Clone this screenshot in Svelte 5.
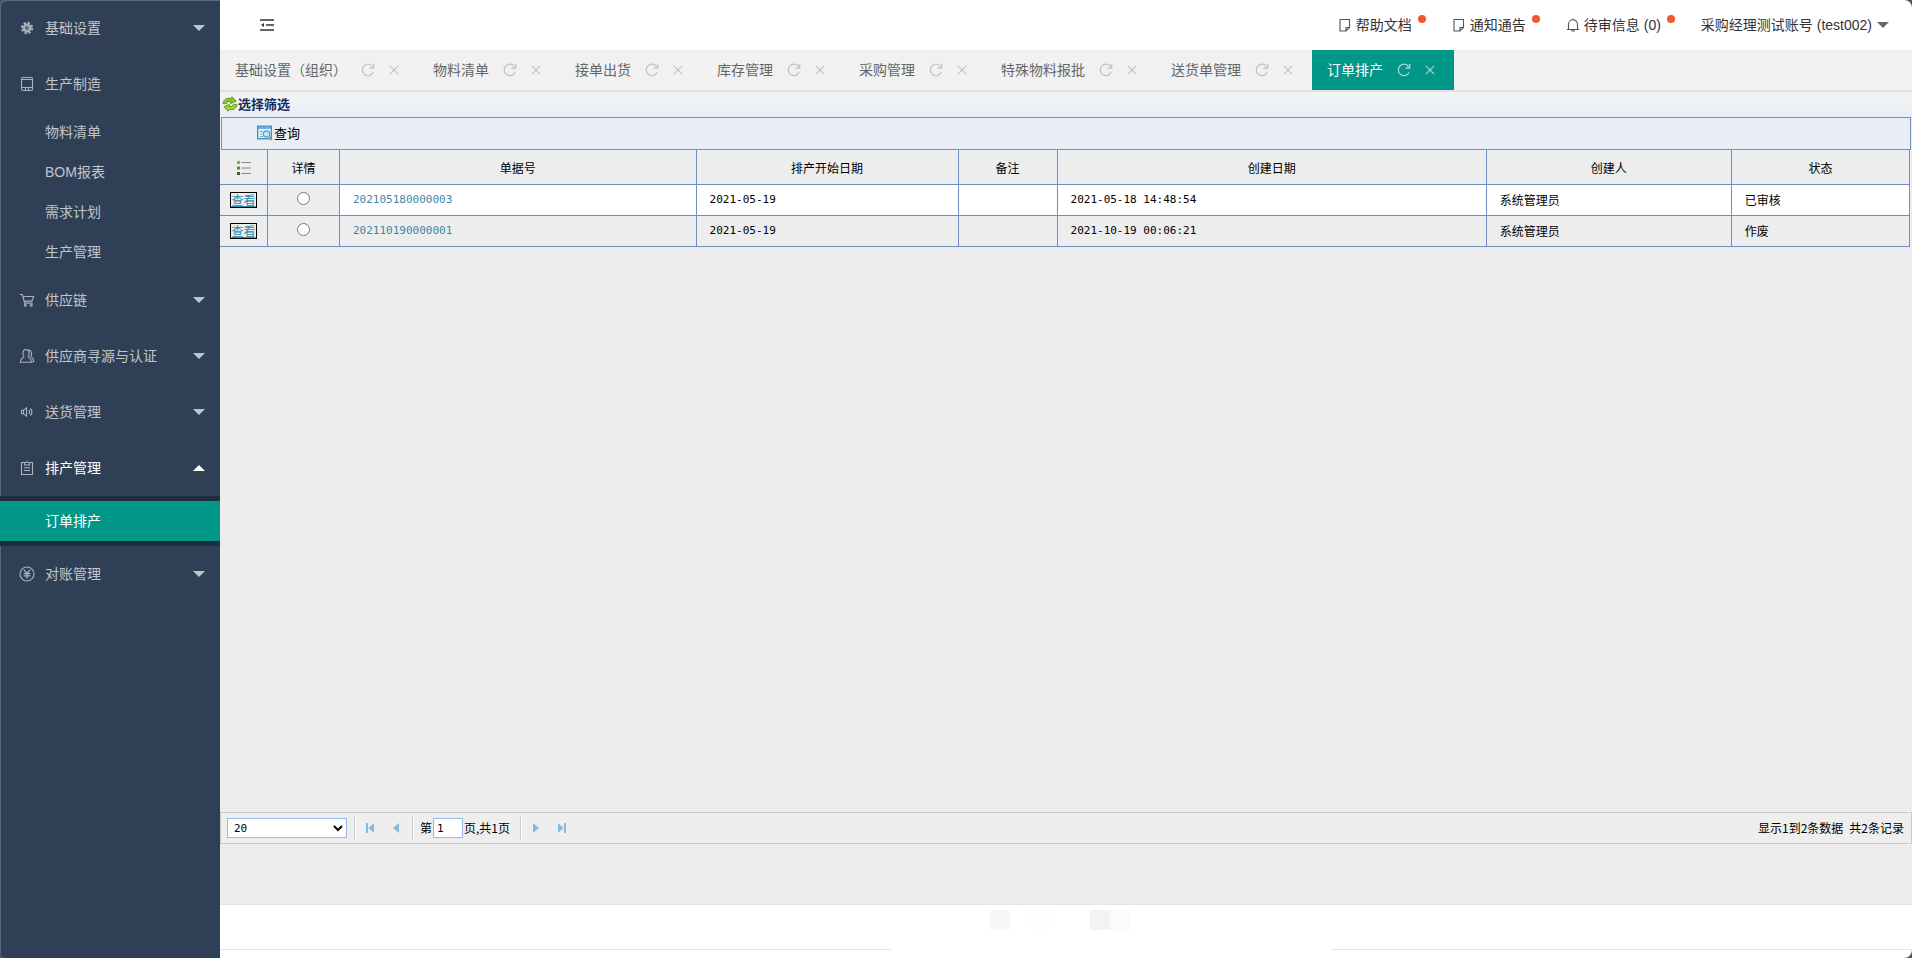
<script>
  const groups = [
    { label: '基础设置', icon: 'gear', arrow: 'down' },
    { label: '生产制造', icon: 'tablet', children: ['物料清单', 'BOM报表', '需求计划', '生产管理'] },
    { label: '供应链', icon: 'cart', arrow: 'down' },
    { label: '供应商寻源与认证', icon: 'users', arrow: 'down' },
    { label: '送货管理', icon: 'speaker', arrow: 'down' },
    { label: '排产管理', icon: 'clipboard', arrow: 'up', open: true, children: ['订单排产'] },
    { label: '对账管理', icon: 'yen', arrow: 'down' }
  ];
  const tabs = ['基础设置（组织）', '物料清单', '接单出货', '库存管理', '采购管理', '特殊物料报批', '送货单管理', '订单排产'];
  const notices = [
    { label: '帮助文档', icon: 'note' },
    { label: '通知通告', icon: 'note' },
    { label: '待审信息 (0)', icon: 'bell' }
  ];
  const rows = [
    { no: '202105180000003', start: '2021-05-19', created: '2021-05-18 14:48:54', by: '系统管理员', state: '已审核' },
    { no: '202110190000001', start: '2021-05-19', created: '2021-10-19 00:06:21', by: '系统管理员', state: '作废' }
  ];
  const tiles = ['a', '', 'c', '', '', 'b', 'd', ''];
  let active = $state('订单排产');
  let picked = $state('');
</script>

{#snippet icon(name)}
  <svg class="icon" viewBox="0 0 16 16" width="16" height="16" fill="none" stroke="currentColor" stroke-width="1.1" aria-hidden="true">
    {#if name === 'gear'}
      <circle cx="8" cy="8" r="3.1" stroke-width="2.6" />
      <circle cx="8" cy="8" r="5" stroke-width="2.4" stroke-dasharray="2.2 1.727" />
      <circle cx="8" cy="8" r="0.8" fill="currentColor" stroke="none" />
    {:else if name === 'tablet'}
      <rect x="2.5" y="1.5" width="11" height="13" rx="1.5" />
      <path d="M2.5 3.500h11M2.5 11.5h11M6.5 11.5v3M9.5 11.5v3" />
    {:else if name === 'cart'}
      <path d="M1 2.500h2.300l2.400 8.600h8M4.200 4.500h10.300l-1.600 4.600H5.400" />
      <circle cx="6.3" cy="13.2" r="1" />
      <circle cx="12.3" cy="13.2" r="1" />
    {:else if name === 'users'}
      <path d="M5 8.400C3.400 7.200 3.300 1.500 7 1.500s3.600 5.700 2 6.900c.2 1.600 3.600 1.300 3.600 5.900H1.200c0-4.600 3.600-4.300 3.800-5.900zM9.600 2.100c3.300-.4 3.600 4.600 2.200 6 .2 1.100 2.800 1.600 2.900 5.200l-1.500.9" />
    {:else if name === 'speaker'}
      <path d="M2.500 6.300h2l3-2.500v8.400l-3-2.500h-2zM4.500 6.300v3.400M9.800 6c1 1.100 1 2.900 0 4M11.400 4.500c2 1.900 2 5.100 0 7" />
    {:else if name === 'clipboard'}
      <path d="M5 2.500H2.500v12h11v-12H11" />
      <path d="M5.500 5V2.500h1.400a1.200 1.200 0 0 1 2.200 0h1.400V5zM5 7.800h6M5 10.500h6" />
    {:else if name === 'yen'}
      <circle cx="8" cy="8" r="7" />
      <path d="M5 3.800l3 3.600 3-3.600M8 7.400v5M4.700 7.600h6.600M4.700 9.900h6.600" stroke-width="1.3" />
    {:else if name === 'note'}
      <path d="M3 2.500h9.500v8l-3.500 3.500H3zM12.500 10.500H9v3.500" />
    {:else if name === 'bell'}
      <path d="M1.800 12.500h12.400M3.500 12.500V7.300a4.500 4.500 0 0 1 9 0v5.200M8 2.800V1.500M6.500 12.500c0 2.400 3 2.400 3 0" />
    {/if}
  </svg>
{/snippet}

<div class="shell">
  <nav class="side" aria-label="主菜单">
    {#each groups as g}
      <button type="button" class="group" class:open={g.open}>
        {@render icon(g.icon)}
        <span>{g.label}</span>
        {#if g.arrow}<i class="caret {g.arrow}"></i>{/if}
      </button>
      {#if g.children}
        <div class="subs" class:dark={g.open}>
          {#each g.children as c}
            <a href="#top" class="sub" class:current={g.open}>{c}</a>
          {/each}
        </div>
      {/if}
    {/each}
  </nav>

  <main class="main">
    <header class="top">
      <button type="button" class="fold" aria-label="收起菜单">
        <svg viewBox="0 0 14 12" width="14" height="12" stroke="#333" stroke-width="1.4" fill="none" aria-hidden="true">
          <path d="M0 1h14M6 6h8M0 11h14" />
          <path d="M4 4v4L1 6z" fill="#333" stroke="none" />
        </svg>
      </button>
      <div class="notices">
        {#each notices as n}
          <a href="#top" class="notice">{@render icon(n.icon)}<span>{n.label}</span><i class="dot"></i></a>
        {/each}
        <button type="button" class="user">采购经理测试账号 (test002)<i class="caret down"></i></button>
      </div>
    </header>

    <div class="tabs">
      {#each tabs as t}
        <div class="tab" class:active={t === active}>
          <button type="button" class="name" onclick={() => (active = t)}>{t}</button>
          <button type="button" class="reload" aria-label="刷新">
            <svg viewBox="0 0 14 14" width="14" height="14" fill="none" stroke="currentColor" stroke-width="1.3" aria-hidden="true">
              <path d="M12.200 9.300A5.700 5.700 0 1 1 11.600 3.500M12.700 1v4H8.700" />
            </svg>
          </button>
          <button type="button" class="close" aria-label="关闭">
            <svg viewBox="0 0 10 10" width="10" height="10" fill="none" stroke="currentColor" stroke-width="1.2" aria-hidden="true">
              <path d="M.8.8l8.400 8.400M9.200.8L.8 9.200" />
            </svg>
          </button>
        </div>
      {/each}
    </div>

    <section class="content">
      <h1 class="title">
        <svg viewBox="0 0 16 16" width="16" height="16" aria-hidden="true">
          <path d="M1 7.500C1.500 3.500 5 1.500 9 2.500L10 .8l4.200 4.400L8.500 7.600l.3-2C6.500 5 5 5.800 4.500 7.800z" fill="#8fc31f" stroke="#4d8a10" stroke-width=".8" />
          <path d="M15 8.500c-.5 4-4 6-8 5L6 15.200 1.800 10.800l5.700-2.400-.3 2c2.300.6 3.800-.2 4.300-2.200z" fill="#a5d22d" stroke="#4d8a10" stroke-width=".8" />
        </svg>选择筛选
      </h1>
      <div class="filter">
        <button type="button" class="query">
          <svg viewBox="0 0 16 16" width="16" height="16" fill="none" aria-hidden="true">
            <rect x=".7" y="1.200" width="13.600" height="12.600" fill="#e4f3fb" stroke="#2f86b8" stroke-width="1.200" />
            <path d="M1 3h13" stroke="#5fb0dc" stroke-width="1.800" />
            <path d="M3 6.500h3M3 9h2M3 11.500h3" stroke="#7aa7c0" />
            <circle cx="9.500" cy="9" r="3.200" fill="#c4e7f7" stroke="#4a9cc9" stroke-width="1.200" />
            <path d="M12.300 11.900l2.700 3" stroke="#c08a48" stroke-width="2" />
          </svg>查询
        </button>
      </div>

      <table class="grid">
        <colgroup>
          <col class="c1" /><col class="c2" /><col class="c3" /><col class="c4" /><col class="c5" /><col class="c6" /><col class="c7" /><col class="c8" />
        </colgroup>
        <thead>
          <tr>
            <th aria-label="操作">
              <svg viewBox="0 0 14 14" width="14" height="14" aria-hidden="true">
                <path d="M4.500 1.500H14M4.500 7H14M4.500 12.500H14" stroke="#888" />
                <path d="M0 0h3v3H0z" fill="#8aa872" />
                <path d="M0 5.500h3v3H0z" fill="#5f8a3c" />
                <path d="M0 11h3v3H0z" fill="#3f6a1e" />
              </svg>
            </th>
            <th>详情</th><th>单据号</th><th>排产开始日期</th><th>备注</th><th>创建日期</th><th>创建人</th><th>状态</th>
          </tr>
        </thead>
        <tbody>
          {#each rows as r}
            <tr>
              <td class="mid"><a href="#top" class="view">查看</a></td>
              <td class="mid"><input type="radio" name="row" value={r.no} bind:group={picked} aria-label={r.no} /></td>
              <td class="num"><a href="#top">{r.no}</a></td>
              <td class="num">{r.start}</td>
              <td></td>
              <td class="num">{r.created}</td>
              <td>{r.by}</td>
              <td>{r.state}</td>
            </tr>
          {/each}
        </tbody>
      </table>

      <div class="space"></div>

      <div class="pager">
        <select class="size" aria-label="每页条数"><option>20</option><option>50</option></select>
        <i class="sep"></i>
        <button type="button" class="go" aria-label="首页"><svg viewBox="0 0 10 12" width="10" height="12" aria-hidden="true"><path d="M1 1h2v10H1zM9 1v10L3.500 6z" /></svg></button>
        <button type="button" class="go" aria-label="上一页"><svg viewBox="0 0 10 12" width="10" height="12" aria-hidden="true"><path d="M8 1v10L2 6z" /></svg></button>
        <i class="sep"></i>
        <label class="page">第<input type="text" value="1" />页,共1页</label>
        <i class="sep"></i>
        <button type="button" class="go" aria-label="下一页"><svg viewBox="0 0 10 12" width="10" height="12" aria-hidden="true"><path d="M2 1v10l6-5z" /></svg></button>
        <button type="button" class="go" aria-label="末页"><svg viewBox="0 0 10 12" width="10" height="12" aria-hidden="true"><path d="M1 1v10l5.500-5zM7 1h2v10H7z" /></svg></button>
        <div class="total"><span>显示1到2条数据</span><span>共2条记录</span></div>
      </div>
      <div class="rest"></div>
    </section>

    <footer class="foot">
      <div class="tiles">
        {#each tiles as t}<i class="tile {t}"></i>{/each}
      </div>
      <div class="rules"><i class="left"></i><i class="hole"></i><i class="right"></i></div>
    </footer>
  </main>
</div>

<style>
  :global(body) {
    background: #4a5768;
  }
  .shell {
    display: flex;
    min-height: 100vh;
    font: 14px/20px "Liberation Sans", "Noto Sans CJK SC", sans-serif;
    color: #333;
  }
  .shell :is(button, input, select) {
    font: inherit;
    color: inherit;
  }
  .shell button {
    padding: 0;
    border: 0;
    background: none;
    cursor: pointer;
  }
  a {
    color: inherit;
    text-decoration: none;
  }
  svg {
    display: block;
    flex: none;
  }
  .caret {
    border: 6px solid transparent;
    border-bottom-width: 0;
    border-top-color: currentColor;
  }
  .caret.up {
    border-bottom-width: 6px;
    border-top-width: 0;
    border-top-color: transparent;
    border-bottom-color: currentColor;
  }

  .side {
    box-sizing: border-box;
    flex: 0 0 220px;
    background: #2f4056;
    box-shadow: inset 1px 1px 0 #5b6878;
    border-radius: 6px 0 0 6px;
    color: #c1c6cd;
  }
  .side .group {
    display: flex;
    align-items: center;
    box-sizing: border-box;
    width: 100%;
    height: 56px;
    padding: 0 15px 0 19px;
    gap: 10px;
    text-align: left;
  }
  .group .icon {
    color: #a9b1bb;
  }
  .group .caret {
    margin-left: auto;
  }
  .side .group.open {
    color: #fff;
  }
  .subs.dark {
    padding: 5px 0;
    background: #1f2e3d;
  }
  .sub {
    display: block;
    padding-left: 45px;
    line-height: 40px;
  }
  .sub.current {
    background: #009688;
    color: #fff;
  }

  .main {
    display: flex;
    flex: 1;
    flex-direction: column;
    min-width: 0;
    overflow: hidden;
    border-radius: 0 8px 8px 0;
    background: #fff;
  }
  .top {
    display: flex;
    align-items: center;
    justify-content: space-between;
    height: 50px;
    padding: 0 23px 0 40px;
  }
  .notices {
    display: flex;
    align-items: center;
    gap: 25px;
  }
  .notice {
    display: flex;
    align-items: center;
    gap: 3px;
  }
  .notice .icon {
    color: #555;
  }
  .dot {
    align-self: flex-start;
    width: 8px;
    height: 8px;
    margin-left: 3px;
    border-radius: 50%;
    background: #f0592b;
  }
  .user {
    display: flex;
    align-items: center;
    gap: 5px;
  }
  .shell .user {
    padding-left: 1px;
  }
  .user .caret {
    color: #666;
  }

  .tabs {
    display: flex;
    height: 40px;
    background: #f1f1f1;
    border-bottom: 2px solid #e2e2e2;
    color: #666;
  }
  .tab {
    display: flex;
    align-items: center;
    padding: 0 19px 0 15px;
  }
  .tab .reload,
  .tab .close {
    margin-left: 14px;
    color: #c4c4c4;
  }
  .tab.active {
    background: #009688;
    color: #fff;
  }
  .tab.active .reload,
  .tab.active .close {
    color: #a6dad5;
  }

  .content {
    display: flex;
    flex: 1;
    flex-direction: column;
    background: #ededed;
    font: 12px/16px "Noto Sans CJK SC", sans-serif;
    color: #000;
  }
  .title {
    display: flex;
    align-items: center;
    box-sizing: border-box;
    height: 25px;
    margin: 0;
    padding: 0 0 2px 2px;
    background: linear-gradient(#f3f3f3, #e9eef6);
    font-size: 13px;
    color: #15295c;
  }
  .filter {
    display: flex;
    box-sizing: border-box;
    height: 33px;
    margin: 0 1px;
    padding: 0 0 2px 35px;
    border: 1px solid #6f8fc0;
    background: #e9edf4;
    box-shadow: 0 2px 0 #eef3fa;
  }
  .query {
    display: flex;
    align-items: center;
    gap: 1px;
  }
  .shell .query {
    font-size: 13px;
  }

  .grid {
    width: 100%;
    padding-right: 2px;
    table-layout: fixed;
    border-spacing: 0;
  }
  .c1 { width: 48px; }
  .c2 { width: 72px; }
  .c3 { width: 21.1%; }
  .c4 { width: 15.5%; }
  .c5 { width: 99px; }
  .c6 { width: 25.4%; }
  .c7 { width: 14.5%; }
  .grid th,
  .grid td {
    height: 30px;
    padding: 0 13px;
    border: solid #6f8fc0;
    border-width: 0 1px 1px 0;
    background: #ededed;
    box-shadow: inset 0 0 0 1px #e9eef7;
  }
  .grid th {
    height: 32px;
    padding: 2px 0 0;
    font-weight: 400;
  }
  .grid th svg {
    margin: 0 auto;
  }
  .grid tbody tr:nth-child(odd) td:not(.mid) {
    background: #fff;
    box-shadow: none;
  }
  .grid .mid {
    padding: 0;
    text-align: center;
  }
  .grid input {
    display: block;
    margin: 0 auto 3px;
  }
  .view {
    display: inline-block;
    border: 1px solid #000;
    line-height: 14px;
    color: #2e8cb4;
    text-decoration: underline;
  }
  .num {
    font: 11px/16px "DejaVu Sans Mono", monospace;
  }
  .num a {
    color: #3f86a8;
  }

  .space {
    flex: 1;
  }
  .pager {
    display: flex;
    align-items: center;
    height: 30px;
    padding: 0 7px 0 6px;
    border: 1px solid #c9c9c9;
    background: #eee;
  }
  .pager .size {
    width: 120px;
    height: 20px;
    margin-right: 2px;
    padding: 0 0 0 2px;
    border: 1px solid #95b8e7;
    border-radius: 0;
    background: #fff;
    font: 11px/16px "DejaVu Sans Mono", monospace;
    color: #000;
  }
  .sep {
    width: 1px;
    height: 24px;
    margin: 0 4px 0 5px;
    background: #ccc;
    box-shadow: 1px 0 0 #fff;
  }
  .shell .go {
    width: 22px;
    height: 24px;
    padding: 0 6px;
  }
  .go + .go {
    margin-left: 4px;
  }
  .go svg {
    fill: #84bbdc;
  }
  .page {
    display: flex;
    align-items: center;
    gap: 1px;
    padding: 0 5px 0 3px;
  }
  .pager .page input {
    box-sizing: border-box;
    width: 30px;
    height: 20px;
    padding: 0 3px;
    border: 1px solid #95b8e7;
    background: #fff;
    font: 11px/16px "DejaVu Sans Mono", monospace;
  }
  .total {
    display: flex;
    gap: 6px;
    margin-left: auto;
  }
  .rest {
    height: 60px;
    border-bottom: 1px solid #e4e4e4;
  }

  .foot {
    padding-top: 5px;
  }
  .tiles {
    display: flex;
    justify-content: center;
    height: 39px;
    padding-left: 8px;
  }
  .tile {
    width: 20px;
    height: 20px;
  }
  .tile.a { background: #f7f7f7; }
  .tile.b { background: #f3f3f3; }
  .tile.c { background: #fefefe; }
  .tile.d { background: #fbfbfb; }
  .rules {
    display: flex;
    height: 9px;
  }
  .left,
  .right {
    border-top: 1px solid #e2e2e2;
  }
  .left { flex: 67; }
  .hole { flex: 44; }
  .right { flex: 58; }
</style>
